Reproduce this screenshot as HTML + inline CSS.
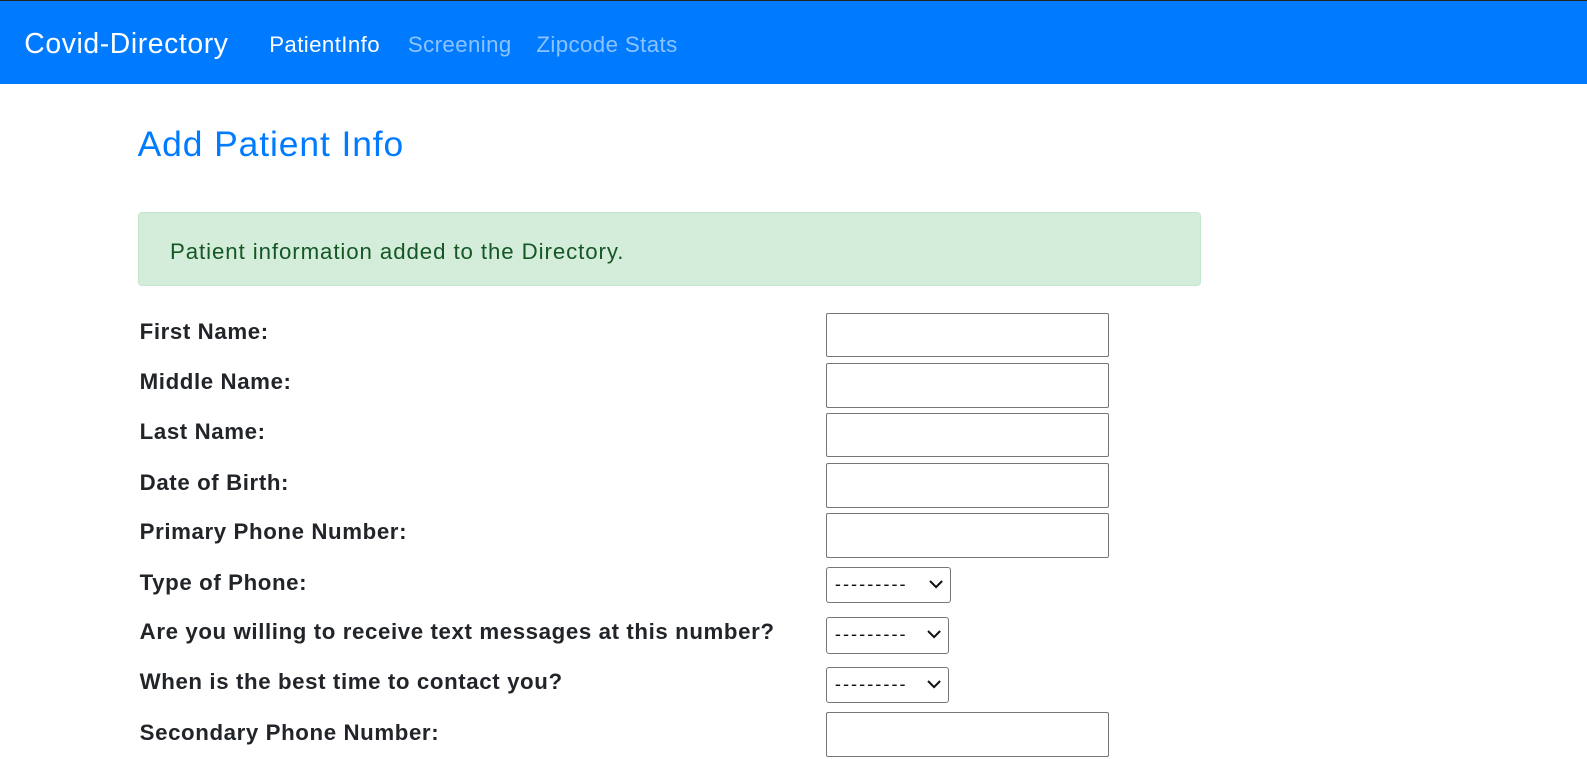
<!DOCTYPE html>
<html><head><style>
body{margin:0;width:1587px;height:758px;overflow:hidden;background:#fff;font-family:"Liberation Sans",sans-serif;position:relative}
#w{zoom:1.012;position:relative;width:1568px;height:750px}
.nav{position:absolute;left:0;top:0;width:1568px;height:83px;background:#007bff;border-top:1px solid #222;box-sizing:border-box}
.nav span{position:absolute;top:29px;font-size:22px;line-height:30px;white-space:nowrap;letter-spacing:.4px}
.a{position:absolute;white-space:nowrap}
.lbl{position:absolute;left:138px;font-weight:bold;font-size:22px;color:#212529;white-space:nowrap;line-height:24px;letter-spacing:.6px}
.in{position:absolute;left:816px;width:280px;height:44px;border:1px solid #767676;border-radius:2px;box-sizing:border-box}
.sel{position:absolute;left:816px;height:36px;border:1px solid #767676;border-radius:3px;box-sizing:border-box;font-size:18px;color:#111}
.sel .d{position:absolute;left:8px;top:6px;letter-spacing:2px}
.sel svg{position:absolute;right:7px;top:12px}
</style></head><body><div id="w">
<div class="nav">
<span style="left:24px;top:28px;font-size:28px;letter-spacing:.6px;color:#fff">Covid-Directory</span>
<span style="left:266px;color:#fff">PatientInfo</span>
<span style="left:403px;color:rgba(255,255,255,.55)">Screening</span>
<span style="left:530px;color:rgba(255,255,255,.55)">Zipcode Stats</span>
</div>
<div class="a" style="left:136px;top:122px;font-size:35px;letter-spacing:.9px;color:#007bff;line-height:42px">Add Patient Info</div>
<div class="a" style="left:136px;top:209px;width:1051px;height:74px;background:#d4edda;border:1px solid #c3e6cb;border-radius:4px;box-sizing:border-box"></div>
<div class="a" style="left:168px;top:236px;font-size:22px;letter-spacing:.9px;color:#155724;line-height:26px">Patient information added to the Directory.</div>

<div class="lbl" style="top:316px">First Name:</div>
<div class="lbl" style="top:366px">Middle Name:</div>
<div class="lbl" style="top:415px">Last Name:</div>
<div class="lbl" style="top:465px">Date of Birth:</div>
<div class="lbl" style="top:514px">Primary Phone Number:</div>
<div class="lbl" style="top:564px">Type of Phone:</div>
<div class="lbl" style="top:613px">Are you willing to receive text messages at this number?</div>
<div class="lbl" style="top:662px">When is the best time to contact you?</div>
<div class="lbl" style="top:712px">Secondary Phone Number:</div>

<div class="in" style="top:309px"></div>
<div class="in" style="top:359px"></div>
<div class="in" style="top:408px"></div>
<div class="in" style="top:458px"></div>
<div class="in" style="top:507px"></div>
<div class="sel" style="top:560px;width:124px"><span class="d">---------</span><svg width="14" height="9" viewBox="0 0 14 9"><path d="M1 1l6 6 6-6" fill="none" stroke="#111" stroke-width="2"/></svg></div>
<div class="sel" style="top:610px;width:122px"><span class="d">---------</span><svg width="14" height="9" viewBox="0 0 14 9"><path d="M1 1l6 6 6-6" fill="none" stroke="#111" stroke-width="2"/></svg></div>
<div class="sel" style="top:659px;width:122px"><span class="d">---------</span><svg width="14" height="9" viewBox="0 0 14 9"><path d="M1 1l6 6 6-6" fill="none" stroke="#111" stroke-width="2"/></svg></div>
<div class="in" style="top:704px"></div>
</div></body></html>
